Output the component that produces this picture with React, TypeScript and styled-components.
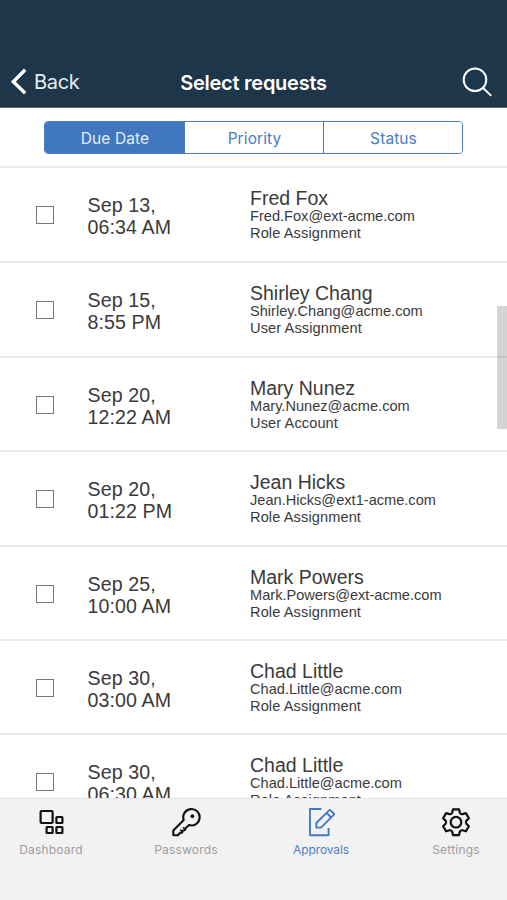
import React from 'react';
import styled, { createGlobalStyle } from 'styled-components';

const GlobalStyle = createGlobalStyle`
  * { box-sizing: border-box; }
  body { margin: 0; background: #fff; }
  button { font: inherit; padding: 0; border: 0; background: none; color: inherit; }
`;

const Screen = styled.div`
  position: relative;
  display: flex;
  flex-direction: column;
  width: 507px;
  height: 900px;
  overflow: hidden;
  background: #fff;
  font-family: 'Liberation Sans', Arial, sans-serif;
  color: #3a3a3a;
`;

const Header = styled.header`
  display: grid;
  grid-template-columns: 1fr auto 1fr;
  align-items: center;
  flex: none;
  height: 108px;
  padding: 56px 14px 0 9px;
  border-bottom: 1px solid #5d6f7c;
  background: #1d364a;
  color: #fff;
`;

const BackButton = styled.button`
  display: flex;
  align-items: center;
  gap: 7px;
  font-family: Inter, sans-serif;
  font-size: 20px;
  line-height: 24px;
  letter-spacing: -0.3px;
  color: #e6edf3;
`;

const Title = styled.h1`
  margin: 3px 0 0 5px;
  font-family: Inter, sans-serif;
  font-size: 20px;
  font-weight: 600;
  line-height: 24px;
  letter-spacing: -0.25px;
`;

const SearchButton = styled.button`
  display: flex;
  justify-self: end;
`;

const FilterBar = styled.div`
  display: flex;
  flex: none;
  height: 60px;
  padding: 13px 44px 0;
  border-bottom: 2px solid #ebebeb;
`;

const Segments = styled.div`
  display: grid;
  grid-template-columns: repeat(3, 1fr);
  width: 419px;
  height: 33px;
  overflow: hidden;
  border: 1px solid #4a7cc4;
  border-radius: 4px;
`;

const Segment = styled.button<{ $active?: boolean }>`
  padding: 2px 0 0 1px;
  font-family: Inter, sans-serif;
  font-size: 15.5px;
  line-height: 30px;
  letter-spacing: 0.1px;
  color: ${(p) => (p.$active ? '#e4eefb' : '#4b7cc5')};
  background: ${(p) => (p.$active ? '#4177be' : '#fff')};
  & + & { border-left: 1px solid #4a7cc4; }
`;

const List = styled.main`
  flex: 1;
  min-height: 0;
  overflow: hidden;
`;

const Row = styled.article<{ $height: number }>`
  display: grid;
  grid-template-columns: 51px 163px 1fr;
  align-items: start;
  height: ${(p) => p.$height}px;
  padding: 20px 0 0 36px;
  border-bottom: 2px solid #ebebeb;
`;

const Checkbox = styled.span`
  width: 18px;
  height: 18px;
  margin-top: 18px;
  border: 1px solid #777;
  background: #fff;
`;

const DueDate = styled.div`
  padding: 6px 0 0 0.5px;
  font-size: 19.6px;
  line-height: 22px;
  letter-spacing: 0.1px;
`;

const Name = styled.div`
  font-size: 19.5px;
  line-height: 20px;
`;

const Detail = styled.div`
  font-size: 14.6px;
  line-height: 17.2px;
`;

const Kind = styled(Detail)`
  letter-spacing: 0.1px;
`;

const ScrollThumb = styled.div`
  position: absolute;
  top: 306px;
  right: 0;
  width: 10px;
  height: 123px;
  background: rgba(0, 0, 0, 0.17);
`;

const TabBar = styled.nav`
  display: grid;
  grid-template-columns: repeat(4, 135px);
  justify-content: center;
  flex: none;
  height: 102px;
  border-top: 1px solid #e4e4e4;
  background: #f2f2f2;
`;

const Tab = styled.button<{ $active?: boolean }>`
  display: flex;
  flex-direction: column;
  align-items: center;
  align-self: start;
  gap: 5px;
  padding-top: 8px;
  color: ${(p) => (p.$active ? '#4279c5' : '#111')};
`;

const TabLabel = styled.span<{ $active?: boolean }>`
  font-family: Inter, sans-serif;
  font-size: 12px;
  line-height: 16px;
  letter-spacing: ${(p) => (p.$active ? '-0.1px' : '0.2px')};
  color: ${(p) => (p.$active ? '#4d7fc6' : '#9d9d9d')};
`;

const Icon = styled.svg`
  display: block;
  fill: none;
  stroke: currentColor;
`;

const DashboardIcon = () => (
  <Icon width="30" height="30" viewBox="0 0 30 30" strokeWidth="2.2" strokeLinejoin="round">
    <rect x="4.6" y="4" width="12" height="12" rx="1" />
    <rect x="20.4" y="10" width="6" height="6" rx=".5" />
    <rect x="10.6" y="20" width="6" height="6" rx=".5" />
    <rect x="20.4" y="20" width="6" height="6" rx=".5" />
  </Icon>
);

const KeyIcon = () => (
  <Icon width="30" height="30" viewBox="0 0 30 30" strokeWidth="2.1" strokeLinejoin="round">
    <path d="M12.7 12.9a8.2 8.2 0 1 1 5.4 5.2L14.7 21l-.9 2.2-2.1.3-.6 2.2-2.1.2L7 28.2H2.3v-4.6Z" />
    <path d="m9.2 22.7 2 2M12 20.3l2 2" strokeWidth="1.4" />
    <circle cx="21.4" cy="9.2" r="1.9" fill="currentColor" stroke="none" />
  </Icon>
);

const EditIcon = () => (
  <Icon width="30" height="30" viewBox="0 0 30 30" strokeWidth="1.9" strokeLinejoin="round">
    <path d="M15.4 2H4v26.2h18.6V21" />
    <path d="M10.3 16 23.1 3.3q.7-.7 1.4 0l3.2 3.2q.7.7 0 1.4L15 20.6h-4.7Z" />
    <path d="m20.5 5.9 4.6 4.6" />
  </Icon>
);

const GearIcon = () => (
  <Icon width="30" height="30" viewBox="0 0 30 30" strokeWidth="2.2" strokeLinejoin="round">
    <path d="M12 2.3h6l.8 3.3q.8 1.8 2.8 1.5l3.3-1 3 5.1-2.5 2.4q-1.3 1.6 0 3.2l2.5 2.4-3 5.1-3.3-1q-2-.3-2.8 1.5l-.8 3.3h-6l-.8-3.3q-.8-1.8-2.8-1.5l-3.3 1-3-5.1 2.5-2.4q1.3-1.6 0-3.2l-2.5-2.4 3-5.1 3.3 1q2 .3 2.8-1.5Z" />
    <circle cx="15" cy="15.2" r="5.3" />
  </Icon>
);

const requests = [
  { day: 'Sep 13,', time: '06:34 AM', name: 'Fred Fox', email: 'Fred.Fox@ext-acme.com', kind: 'Role Assignment', height: 95 },
  { day: 'Sep 15,', time: '8:55 PM', name: 'Shirley Chang', email: 'Shirley.Chang@acme.com', kind: 'User Assignment', height: 95 },
  { day: 'Sep 20,', time: '12:22 AM', name: 'Mary Nunez', email: 'Mary.Nunez@acme.com', kind: 'User Account', height: 94 },
  { day: 'Sep 20,', time: '01:22 PM', name: 'Jean Hicks', email: 'Jean.Hicks@ext1-acme.com', kind: 'Role Assignment', height: 95 },
  { day: 'Sep 25,', time: '10:00 AM', name: 'Mark Powers', email: 'Mark.Powers@ext-acme.com', kind: 'Role Assignment', height: 94 },
  { day: 'Sep 30,', time: '03:00 AM', name: 'Chad Little', email: 'Chad.Little@acme.com', kind: 'Role Assignment', height: 94 },
  { day: 'Sep 30,', time: '06:30 AM', name: 'Chad Little', email: 'Chad.Little@acme.com', kind: 'Role Assignment', height: 94 },
];

const tabs = [
  { label: 'Dashboard', Glyph: DashboardIcon },
  { label: 'Passwords', Glyph: KeyIcon },
  { label: 'Approvals', Glyph: EditIcon, active: true },
  { label: 'Settings', Glyph: GearIcon },
];

export default function App() {
  return (
    <Screen>
      <GlobalStyle />
      <Header>
        <BackButton>
          <Icon width="18" height="28" viewBox="0 0 18 28" strokeWidth="3.4">
            <path d="M16.2 1.8 4.3 13.7l11.9 11.5" stroke="#fff" />
          </Icon>
          Back
        </BackButton>
        <Title>Select requests</Title>
        <SearchButton aria-label="Search">
          <Icon width="32" height="32" viewBox="0 0 32 32" strokeWidth="2">
            <circle cx="14" cy="13.7" r="11.3" />
            <path d="m21.9 21.7 8.4 8.2" />
          </Icon>
        </SearchButton>
      </Header>
      <FilterBar>
        <Segments>
          <Segment $active>Due Date</Segment>
          <Segment>Priority</Segment>
          <Segment>Status</Segment>
        </Segments>
      </FilterBar>
      <List>
        {requests.map(({ day, time, name, email, kind, height }) => (
          <Row key={day + time} $height={height}>
            <Checkbox />
            <DueDate>
              {day}
              <br />
              {time}
            </DueDate>
            <div>
              <Name>{name}</Name>
              <Detail>{email}</Detail>
              <Kind>{kind}</Kind>
            </div>
          </Row>
        ))}
      </List>
      <TabBar>
        {tabs.map(({ label, Glyph, active }) => (
          <Tab key={label} $active={active}>
            <Glyph />
            <TabLabel $active={active}>{label}</TabLabel>
          </Tab>
        ))}
      </TabBar>
      <ScrollThumb />
    </Screen>
  );
}
